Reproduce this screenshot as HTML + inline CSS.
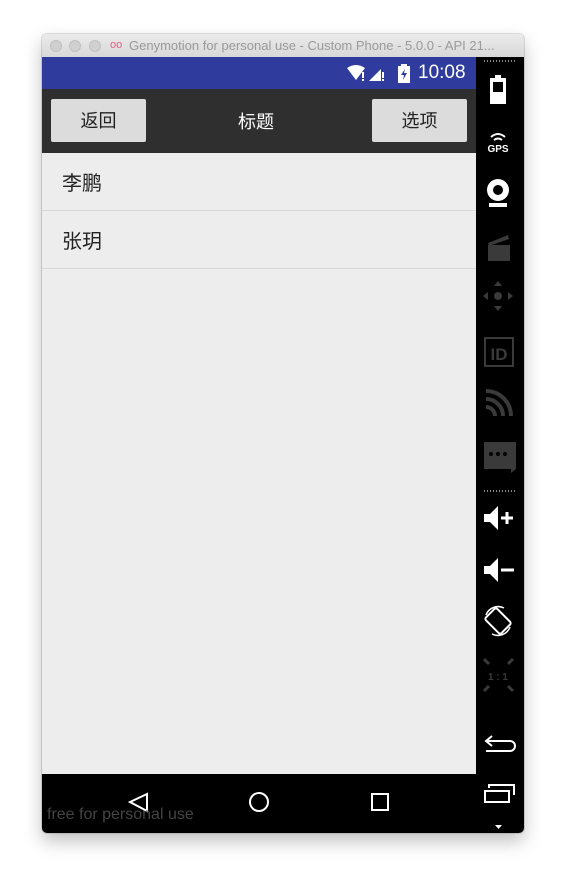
<!DOCTYPE html>
<html><head><meta charset="utf-8"><style>
*{margin:0;padding:0;box-sizing:border-box}
body{width:566px;height:884px;background:#fff;position:relative;overflow:hidden;font-family:"Liberation Sans","Noto Sans CJK SC",sans-serif}
.win{position:absolute;left:42px;top:34px;width:482px;height:799px;border-radius:5px;overflow:hidden;box-shadow:0 8px 18px rgba(0,0,0,.25),0 0 0 1px rgba(0,0,0,.12)}
.title{position:absolute;left:0;top:0;width:482px;height:23px;background:linear-gradient(#ebebeb,#d8d8d8);font-size:13px;color:#9a9a9a;line-height:23px;white-space:nowrap}
.dot{position:absolute;top:6px;width:12px;height:12px;border-radius:50%;background:#d0d0d0;border:1px solid #c0c0c0}
.status{position:absolute;left:0;top:23px;width:434px;height:32px;background:#2f3c9e;color:#fff;font-size:19px}
.bar{position:absolute;left:0;top:55px;width:434px;height:64px;background:#2f2f2f}
.btn{position:absolute;top:10px;width:95px;height:43px;background:#dcdcdc;border-radius:2px;font-size:18px;color:#222;text-align:center;line-height:45px}
.list{position:absolute;left:0;top:119px;width:434px;height:621px;background:#ededed}
.row{height:58px;border-bottom:1px solid #d8d8d8;font-size:20px;color:#222;line-height:62px;padding-left:20px}
.nav{position:absolute;left:0;top:740px;width:434px;height:59px;background:#000}
.side{position:absolute;left:434px;top:23px;width:48px;height:776px;background:#000}
.side svg{position:absolute;left:0}
</style></head><body>
<div class="win">
 <div class="title">
  <div class="dot" style="left:8px"></div><div class="dot" style="left:27px"></div><div class="dot" style="left:47px"></div>
  <span style="position:absolute;left:68px;color:#e06080;font-size:11px">oo</span>
  <span style="position:absolute;left:87px">Genymotion for personal use - Custom Phone - 5.0.0 - API 21...</span>
 </div>
 <div class="status">
  <svg style="position:absolute;left:305px;top:8px" width="50" height="18"><path d="M0 3 Q9 -3 18 3 L9 15Z" fill="#fff"/><rect x="15" y="7" width="2" height="6" fill="#fff"/><rect x="15" y="14" width="2" height="2" fill="#fff"/><path d="M22 16 L34 4 L34 16Z" fill="#fff"/><rect x="35" y="7" width="2" height="6" fill="#fff"/><rect x="35" y="14" width="2" height="2" fill="#fff"/></svg>
  <svg style="position:absolute;left:356px;top:7px" width="12" height="19"><rect x="0" y="2" width="12" height="17" fill="#fff"/><rect x="3" y="0" width="6" height="3" fill="#fff"/><path d="M7 5 L3 11 L6 11 L5 16 L9 9 L6 9Z" fill="#2f3c9e"/></svg>
  <span style="position:absolute;left:376px;top:5px">10:08</span>
 </div>
 <div class="bar">
  <div class="btn" style="left:9px">返回</div>
  <div style="position:absolute;left:196px;top:1px;line-height:64px;color:#fff;font-size:18px">标题</div>
  <div class="btn" style="left:330px">选项</div>
 </div>
 <div class="list"><div class="row">李鹏</div><div class="row">张玥</div></div>
 <div class="nav">
  <svg width="434" height="59"><path d="M105 20 L88 28 L105 37Z" fill="none" stroke="#fff" stroke-width="2"/><circle cx="217" cy="28" r="9" fill="none" stroke="#fff" stroke-width="2"/><rect x="330" y="20" width="16" height="16" fill="none" stroke="#fff" stroke-width="2"/></svg>
  <span style="position:absolute;left:5px;top:32px;color:#444;font-size:16px">free for personal use</span>
 </div>
 <div class="side">
  <svg width="48" height="776">
   <path d="M8 4 L40 4" stroke="#888" stroke-width="2" stroke-dasharray="1 2"/>
   <rect x="14" y="21" width="16" height="26" fill="#fff"/><rect x="19" y="18" width="6" height="4" fill="#fff"/><rect x="17" y="25" width="10" height="10" fill="#000"/>
   <path d="M15 80 Q22 74 29 80 M18 83 Q22 80 26 83" stroke="#fff" stroke-width="2" fill="none"/>
   <text x="22" y="95" fill="#fff" font-size="10" font-weight="bold" text-anchor="middle" font-family="Liberation Sans">GPS</text>
   <circle cx="22" cy="133" r="11" fill="#fff"/><circle cx="22" cy="133" r="5" fill="#000"/><rect x="13" y="146" width="18" height="4" fill="#fff"/>
   <rect x="12" y="188" width="22" height="16" fill="#3a3a3a"/><path d="M12 186 L32 178 L33 182 L13 189Z" fill="#3a3a3a"/>
   <path d="M22 224 l4 5 h-8Z M22 254 l4-5 h-8Z M7 239 l5 4 v-8Z M37 239 l-5 4 v-8Z" fill="#3a3a3a"/><circle cx="22" cy="239" r="4" fill="#3a3a3a"/>
   <rect x="9" y="281" width="28" height="28" fill="none" stroke="#3a3a3a" stroke-width="2"/><text x="23" y="303" fill="#3a3a3a" font-size="17" font-weight="bold" text-anchor="middle" font-family="Liberation Sans">ID</text>
   <path d="M10 334 A25 25 0 0 1 35 359 M10 342 A17 17 0 0 1 27 359 M10 350 A9 9 0 0 1 19 359" stroke="#3a3a3a" stroke-width="4" fill="none"/>
   <path d="M8 385 H40 V412 L35 416 V412 H8Z" fill="#3a3a3a"/><circle cx="15" cy="397" r="2" fill="#000"/><circle cx="22" cy="397" r="2" fill="#000"/><circle cx="29" cy="397" r="2" fill="#000"/>
   <path d="M8 434 L40 434" stroke="#888" stroke-width="2" stroke-dasharray="1 2"/>
   <path d="M8 457 h6 l8 -8 v24 l-8 -8 h-6Z" fill="#fff"/><path d="M25 461 h12 M31 455 v12" stroke="#fff" stroke-width="3"/>
   <path d="M8 509 h6 l8 -8 v24 l-8 -8 h-6Z" fill="#fff"/><path d="M25 513 h13" stroke="#fff" stroke-width="3"/>
   <rect x="14" y="553" width="16" height="22" rx="2" transform="rotate(-45 22 564)" fill="none" stroke="#fff" stroke-width="2"/>
   <path d="M10 558 A13 13 0 0 1 28 551 M34 570 A13 13 0 0 1 16 577" stroke="#fff" stroke-width="1.5" fill="none"/>
   <text x="22" y="623" fill="#3a3a3a" font-size="10" font-weight="bold" text-anchor="middle" font-family="Liberation Sans">1 : 1</text>
   <path d="M8 602 l5 5 M8 634 l5-5 M37 602 l-5 5 M37 634 l-5-5" stroke="#3a3a3a" stroke-width="3"/>
   <path d="M16 679 l-6 5 l6 5 M10 684 h24 a5 5 0 0 1 0 10 h-24" stroke="#fff" stroke-width="2" fill="none"/>
   <rect x="9" y="734" width="24" height="11" fill="none" stroke="#fff" stroke-width="2"/><path d="M13 731 v-3 h25 v10" stroke="#fff" stroke-width="2" fill="none"/>
   <path d="M19 768 h7 l-3.5 4Z" fill="#fff"/>
  </svg>
 </div>
</div>
</body></html>
